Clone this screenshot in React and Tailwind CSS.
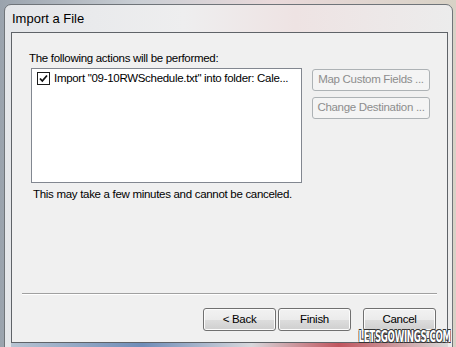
import React from 'react';

const ui = { fontFamily: '"Liberation Sans", Arial, sans-serif' };

function Check() {
  return (
    <div className="w-[13px] h-[13px] border border-[#1c1c1c] bg-white flex items-center justify-center shrink-0">
      <svg width="11" height="11" viewBox="0 0 11 11">
        <path d="M2 5.5 L4.3 8 L9 2.5" fill="none" stroke="#111" strokeWidth="1.8" />
      </svg>
    </div>
  );
}

function Button({ children, disabled, className = '' }) {
  if (disabled) {
    return (
      <div className={`h-[22px] rounded-[3px] border border-[#adb2b5] bg-[#f4f4f4] text-[#8d8d8d] flex items-center justify-center whitespace-nowrap ${className}`}>
        {children}
      </div>
    );
  }
  return (
    <div className={`h-[23px] rounded-[3px] border border-[#707070] bg-[linear-gradient(#f2f2f2_0%,#ebebeb_50%,#dddddd_51%,#cfcfcf_100%)] shadow-[inset_0_0_0_1px_#fcfcfc] text-black flex items-center justify-center ${className}`}>
      {children}
    </div>
  );
}

export default function App() {
  return (
    <div className="relative w-[456px] h-[347px] overflow-hidden bg-[linear-gradient(90deg,#9aa3ad_0%,#c9ced4_30%,#e9d9da_60%,#d8d2c6_100%)]" style={ui}>
      <div className="ml-[4px] mt-[4px] w-[449px] h-[350px] rounded-t-[7px] border border-[#6f7479] bg-[linear-gradient(90deg,#e4e6e9_0%,#eeeeef_40%,#eee3e3_65%,#ececec_100%)] flex flex-col pl-[6px] pr-[4px]">
        <div className="h-[27px] flex items-center pl-[1px] pt-[1px] text-[13px] text-black">Import a File</div>
        <div className="w-[437px] h-[311px] border border-[#5f6368] bg-[#f0f0f0] flex flex-col text-[11.5px] tracking-[-0.3px] text-black">
          <div className="ml-[17px] mt-[17px] h-[16px] leading-[16px]">The following actions will be performed:</div>
          <div className="flex ml-[19px] mt-[2px]">
            <div className="w-[271px] h-[115px] border border-[#828790] bg-white pl-[5px] pr-[4px] pt-[2px] overflow-hidden">
              <div className="flex items-center gap-[4px] h-[14px]">
                <Check />
                <span className="leading-[14px] whitespace-nowrap">Import "09-10RWSchedule.txt" into folder: Cale...</span>
              </div>
            </div>
            <div className="ml-[10px] mt-[1px] flex flex-col gap-[6px]">
              <Button disabled className="w-[118px]">Map Custom Fields ...</Button>
              <Button disabled className="w-[118px]">Change Destination ...</Button>
            </div>
          </div>
          <div className="ml-[21px] mt-[3px] h-[16px] leading-[16px]">This may take a few minutes and cannot be canceled.</div>
          <div className="mx-[10px] mt-[91px] h-[2px] border-t border-[#a0a0a0] border-b border-b-white" />
          <div className="flex justify-end mt-[13px] mr-[11px]">
            <Button className="w-[73px]">&lt; Back</Button>
            <Button className="w-[73px] ml-[2px]">Finish</Button>
            <Button className="w-[73px] ml-[12px]">Cancel</Button>
          </div>
        </div>
        <div className="flex-1 bg-[linear-gradient(90deg,#b8c4d2_0%,#6f8db8_30%,#d8d8dc_55%,#c0555e_75%,#d8d8d8_100%)]" />
      </div>
      <div
        className="absolute right-[5px] bottom-[-2px] text-[16px] font-bold text-white tracking-[-0.5px] [text-shadow:1px_1px_0_#333,-1px_-1px_0_#333,1px_-1px_0_#333,-1px_1px_0_#333]"
        style={{ fontFamily: '"DejaVu Sans Condensed", "Liberation Sans Narrow", sans-serif', transform: 'scaleX(0.6)', transformOrigin: 'right' }}
      >
        LETSGOWINGS.COM
      </div>
    </div>
  );
}
